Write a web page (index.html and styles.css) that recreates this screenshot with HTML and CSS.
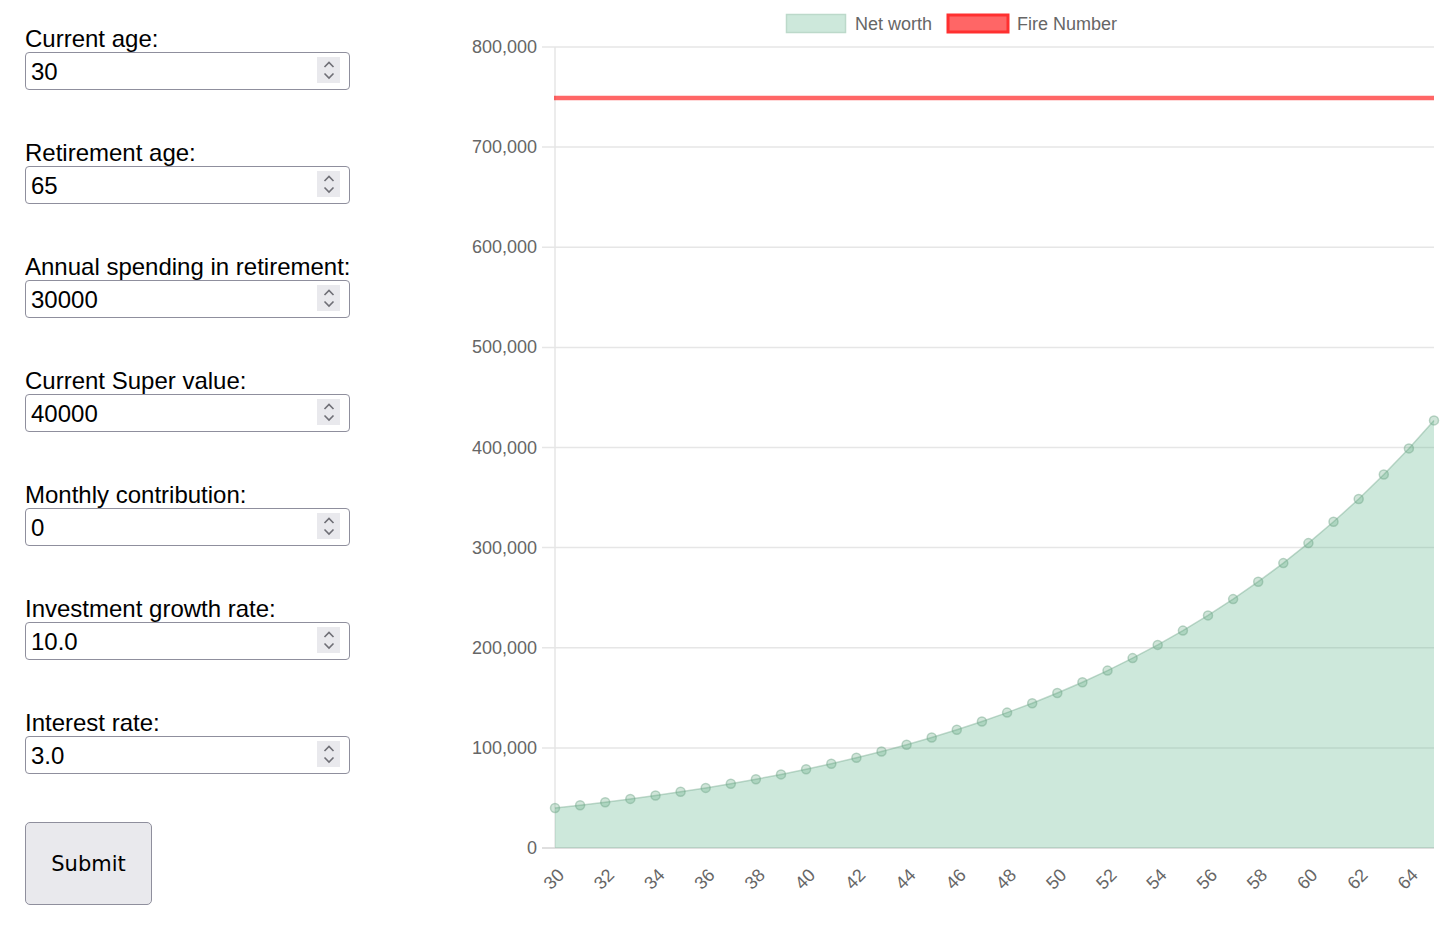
FILE: index.html
```html
<!DOCTYPE html>
<html lang="en">
<head>
<meta charset="utf-8">
<title>FIRE calculator</title>
<link rel="stylesheet" href="styles.css">
</head>
<body>
<div class="page">
  <form class="form">
    <div class="fields">
      <div class="field">
        <label class="label" for="age">Current age:</label>
        <div class="input-wrap">
          <input class="input" id="age" type="number" value="30">
          <span class="spin"><svg width="23" height="26" viewBox="0 0 23 26"><path d="M7.5 10 L12 5.5 L16.5 10 M7.5 16.5 L12 21 L16.5 16.5" fill="none" stroke="#6f6f76" stroke-width="1.6"/></svg></span>
        </div>
      </div>
      <div class="field">
        <label class="label" for="ret">Retirement age:</label>
        <div class="input-wrap">
          <input class="input" id="ret" type="number" value="65">
          <span class="spin"><svg width="23" height="26" viewBox="0 0 23 26"><path d="M7.5 10 L12 5.5 L16.5 10 M7.5 16.5 L12 21 L16.5 16.5" fill="none" stroke="#6f6f76" stroke-width="1.6"/></svg></span>
        </div>
      </div>
      <div class="field">
        <label class="label" for="spend">Annual spending in retirement:</label>
        <div class="input-wrap">
          <input class="input" id="spend" type="number" value="30000">
          <span class="spin"><svg width="23" height="26" viewBox="0 0 23 26"><path d="M7.5 10 L12 5.5 L16.5 10 M7.5 16.5 L12 21 L16.5 16.5" fill="none" stroke="#6f6f76" stroke-width="1.6"/></svg></span>
        </div>
      </div>
      <div class="field">
        <label class="label" for="super">Current Super value:</label>
        <div class="input-wrap">
          <input class="input" id="super" type="number" value="40000">
          <span class="spin"><svg width="23" height="26" viewBox="0 0 23 26"><path d="M7.5 10 L12 5.5 L16.5 10 M7.5 16.5 L12 21 L16.5 16.5" fill="none" stroke="#6f6f76" stroke-width="1.6"/></svg></span>
        </div>
      </div>
      <div class="field">
        <label class="label" for="contrib">Monthly contribution:</label>
        <div class="input-wrap">
          <input class="input" id="contrib" type="number" value="0">
          <span class="spin"><svg width="23" height="26" viewBox="0 0 23 26"><path d="M7.5 10 L12 5.5 L16.5 10 M7.5 16.5 L12 21 L16.5 16.5" fill="none" stroke="#6f6f76" stroke-width="1.6"/></svg></span>
        </div>
      </div>
      <div class="field">
        <label class="label" for="growth">Investment growth rate:</label>
        <div class="input-wrap">
          <input class="input" id="growth" type="number" value="10.0" step="0.1">
          <span class="spin"><svg width="23" height="26" viewBox="0 0 23 26"><path d="M7.5 10 L12 5.5 L16.5 10 M7.5 16.5 L12 21 L16.5 16.5" fill="none" stroke="#6f6f76" stroke-width="1.6"/></svg></span>
        </div>
      </div>
      <div class="field">
        <label class="label" for="interest">Interest rate:</label>
        <div class="input-wrap">
          <input class="input" id="interest" type="number" value="3.0" step="0.1">
          <span class="spin"><svg width="23" height="26" viewBox="0 0 23 26"><path d="M7.5 10 L12 5.5 L16.5 10 M7.5 16.5 L12 21 L16.5 16.5" fill="none" stroke="#6f6f76" stroke-width="1.6"/></svg></span>
        </div>
      </div>
    </div>
    <button class="submit" type="button">Submit</button>
  </form>

  <div class="chart">
    <svg class="chart-svg" width="1009" height="939" viewBox="440 0 1009 939">
      <!-- legend -->
      <rect x="786.5" y="14.5" width="59" height="18" fill="#cde8db" stroke="#bcd9ca" stroke-width="1.5"/>
      <text class="tick" x="855" y="23.5">Net worth</text>
      <rect x="948" y="15" width="60" height="17" fill="#ff6666" stroke="#ff3030" stroke-width="3"/>
      <text class="tick" x="1017" y="23.5">Fire Number</text>

      <!-- grid -->
      <g stroke="#e6e6e6" stroke-width="1.5">
        <line x1="542" y1="47" x2="1434" y2="47"/>
        <line x1="542" y1="147.1" x2="1434" y2="147.1"/>
        <line x1="542" y1="247.3" x2="1434" y2="247.3"/>
        <line x1="542" y1="347.4" x2="1434" y2="347.4"/>
        <line x1="542" y1="447.5" x2="1434" y2="447.5"/>
        <line x1="542" y1="547.6" x2="1434" y2="547.6"/>
        <line x1="542" y1="647.8" x2="1434" y2="647.8"/>
        <line x1="542" y1="747.9" x2="1434" y2="747.9"/>
        <line x1="555" y1="47" x2="555" y2="848"/>
      </g>
      <line x1="542" y1="848" x2="1434" y2="848" stroke="#d4d4d4" stroke-width="1.5"/>

      <!-- y labels -->
      <g class="tick ylabels">
        <text x="537" y="47">800,000</text>
        <text x="537" y="147.1">700,000</text>
        <text x="537" y="247.3">600,000</text>
        <text x="537" y="347.4">500,000</text>
        <text x="537" y="447.5">400,000</text>
        <text x="537" y="547.6">300,000</text>
        <text x="537" y="647.8">200,000</text>
        <text x="537" y="747.9">100,000</text>
        <text x="537" y="848">0</text>
      </g>

      <!-- area -->
      <path fill="rgba(88,178,135,0.3)" d="M555,848 L555,808.0 L580.1,805.2 L605.2,802.2 L630.3,798.9 L655.5,795.5 L680.6,791.8 L705.7,787.9 L730.8,783.7 L755.9,779.2 L781.0,774.4 L806.1,769.2 L831.3,763.7 L856.4,757.8 L881.5,751.5 L906.6,744.7 L931.7,737.5 L956.8,729.8 L981.9,721.5 L1007.1,712.6 L1032.2,703.2 L1057.3,693.0 L1082.4,682.2 L1107.5,670.6 L1132.6,658.1 L1157.7,644.9 L1182.9,630.6 L1208.0,615.4 L1233.1,599.1 L1258.2,581.7 L1283.3,563.1 L1308.4,543.1 L1333.5,521.8 L1358.7,499.0 L1383.8,474.5 L1408.9,448.4 L1434,420.4 L1434,848 Z"/>
      <polyline fill="none" stroke="rgba(120,170,145,0.45)" stroke-width="1.5" points="555,808.0 580.1,805.2 605.2,802.2 630.3,798.9 655.5,795.5 680.6,791.8 705.7,787.9 730.8,783.7 755.9,779.2 781.0,774.4 806.1,769.2 831.3,763.7 856.4,757.8 881.5,751.5 906.6,744.7 931.7,737.5 956.8,729.8 981.9,721.5 1007.1,712.6 1032.2,703.2 1057.3,693.0 1082.4,682.2 1107.5,670.6 1132.6,658.1 1157.7,644.9 1182.9,630.6 1208.0,615.4 1233.1,599.1 1258.2,581.7 1283.3,563.1 1308.4,543.1 1333.5,521.8 1358.7,499.0 1383.8,474.5 1408.9,448.4 1434,420.4"/>

      <!-- points -->
      <g fill="rgba(100,170,130,0.3)" stroke="rgba(110,165,135,0.45)" stroke-width="1.5">
        <circle cx="555" cy="808.0" r="4.5"/><circle cx="580.1" cy="805.2" r="4.5"/><circle cx="605.2" cy="802.2" r="4.5"/><circle cx="630.3" cy="798.9" r="4.5"/>
        <circle cx="655.5" cy="795.5" r="4.5"/><circle cx="680.6" cy="791.8" r="4.5"/><circle cx="705.7" cy="787.9" r="4.5"/><circle cx="730.8" cy="783.7" r="4.5"/>
        <circle cx="755.9" cy="779.2" r="4.5"/><circle cx="781.0" cy="774.4" r="4.5"/><circle cx="806.1" cy="769.2" r="4.5"/><circle cx="831.3" cy="763.7" r="4.5"/>
        <circle cx="856.4" cy="757.8" r="4.5"/><circle cx="881.5" cy="751.5" r="4.5"/><circle cx="906.6" cy="744.7" r="4.5"/><circle cx="931.7" cy="737.5" r="4.5"/>
        <circle cx="956.8" cy="729.8" r="4.5"/><circle cx="981.9" cy="721.5" r="4.5"/><circle cx="1007.1" cy="712.6" r="4.5"/><circle cx="1032.2" cy="703.2" r="4.5"/>
        <circle cx="1057.3" cy="693.0" r="4.5"/><circle cx="1082.4" cy="682.2" r="4.5"/><circle cx="1107.5" cy="670.6" r="4.5"/><circle cx="1132.6" cy="658.1" r="4.5"/>
        <circle cx="1157.7" cy="644.9" r="4.5"/><circle cx="1182.9" cy="630.6" r="4.5"/><circle cx="1208.0" cy="615.4" r="4.5"/><circle cx="1233.1" cy="599.1" r="4.5"/>
        <circle cx="1258.2" cy="581.7" r="4.5"/><circle cx="1283.3" cy="563.1" r="4.5"/><circle cx="1308.4" cy="543.1" r="4.5"/><circle cx="1333.5" cy="521.8" r="4.5"/>
        <circle cx="1358.7" cy="499.0" r="4.5"/><circle cx="1383.8" cy="474.5" r="4.5"/><circle cx="1408.9" cy="448.4" r="4.5"/><circle cx="1434" cy="420.4" r="4.5"/>
      </g>

      <!-- fire number line -->
      <line x1="554" y1="98" x2="1434" y2="98" stroke="rgba(255,0,0,0.6)" stroke-width="4.5"/>

      <!-- x labels -->
      <g class="tick xlabels">
        <text transform="translate(561 872) rotate(-45)">30</text>
        <text transform="translate(611.2 872) rotate(-45)">32</text>
        <text transform="translate(661.5 872) rotate(-45)">34</text>
        <text transform="translate(711.7 872) rotate(-45)">36</text>
        <text transform="translate(761.9 872) rotate(-45)">38</text>
        <text transform="translate(812.1 872) rotate(-45)">40</text>
        <text transform="translate(862.4 872) rotate(-45)">42</text>
        <text transform="translate(912.6 872) rotate(-45)">44</text>
        <text transform="translate(962.8 872) rotate(-45)">46</text>
        <text transform="translate(1013.1 872) rotate(-45)">48</text>
        <text transform="translate(1063.3 872) rotate(-45)">50</text>
        <text transform="translate(1113.5 872) rotate(-45)">52</text>
        <text transform="translate(1163.7 872) rotate(-45)">54</text>
        <text transform="translate(1214 872) rotate(-45)">56</text>
        <text transform="translate(1264.2 872) rotate(-45)">58</text>
        <text transform="translate(1314.4 872) rotate(-45)">60</text>
        <text transform="translate(1364.6 872) rotate(-45)">62</text>
        <text transform="translate(1414.9 872) rotate(-45)">64</text>
      </g>
    </svg>
  </div>
</div>
</body>
</html>
```

FILE: styles.css
```css
html, body {
  margin: 0;
  padding: 0;
  background: #ffffff;
  overflow: hidden;
}

.page {
  display: flex;
  width: 1449px;
  height: 939px;
}

.form {
  width: 440px;
  flex: 0 0 440px;
  padding: 25px 0 0 25px;
  box-sizing: border-box;
  display: flex;
  flex-direction: column;
  align-items: flex-start;
}

.fields {
  display: flex;
  flex-direction: column;
  gap: 49px;
}

.field {
  display: flex;
  flex-direction: column;
}

.label {
  display: block;
  font-family: "Liberation Sans", Arial, sans-serif;
  font-size: 24px;
  line-height: 27px;
  color: #000;
}

.input-wrap {
  position: relative;
  width: 325px;
  height: 38px;
}

.input {
  width: 325px;
  height: 38px;
  box-sizing: border-box;
  border: 1px solid #8f8f9d;
  border-radius: 4px;
  padding: 2px 5px 0;
  margin: 0;
  font-family: "Liberation Sans", Arial, sans-serif;
  font-size: 24px;
  color: #000;
  background: #fff;
  -moz-appearance: textfield;
  appearance: textfield;
}

.input::-webkit-inner-spin-button,
.input::-webkit-outer-spin-button {
  -webkit-appearance: none;
  margin: 0;
}

.spin {
  position: absolute;
  left: 292px;
  top: 5px;
  width: 23px;
  height: 26px;
  background: #e9e9ed;
  display: block;
}

.spin svg {
  display: block;
}

.submit {
  margin-top: 48px;
  width: 127px;
  height: 83px;
  box-sizing: border-box;
  border: 1px solid #8f8f9d;
  border-radius: 5px;
  background: #e9e9ed;
  font-family: "DejaVu Sans", Verdana, sans-serif;
  font-size: 21px;
  color: #000;
  padding: 0;
}

.chart {
  flex: 1 1 auto;
}

.chart-svg {
  display: block;
}

.tick {
  font-family: "Liberation Sans", Arial, sans-serif;
  font-size: 18px;
  fill: #666666;
  dominant-baseline: central;
}

.ylabels text {
  text-anchor: end;
}

.xlabels text {
  text-anchor: end;
}
```
